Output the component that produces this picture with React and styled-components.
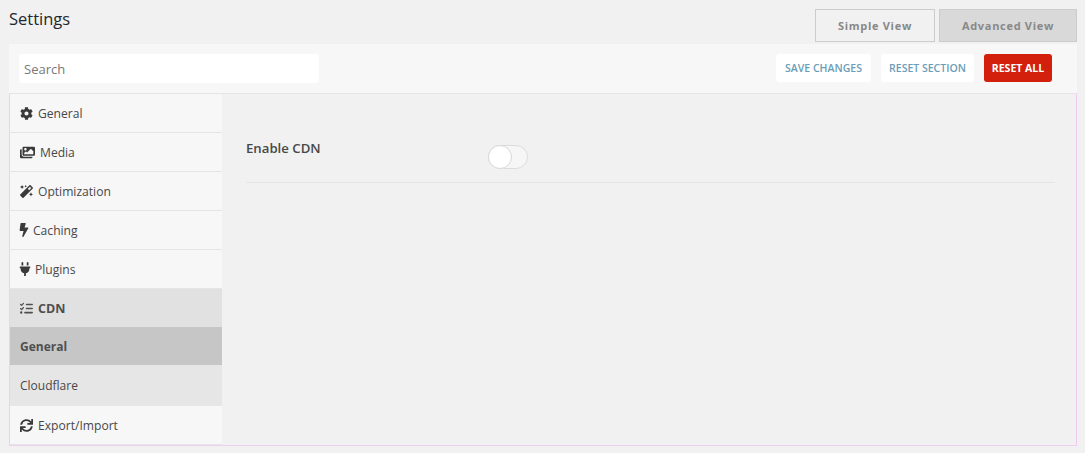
import React from "react";
import styled, { createGlobalStyle } from "styled-components";
import { FaCog, FaImages, FaMagic, FaBolt, FaPlug, FaSync } from "react-icons/fa";
import { FaListCheck } from "react-icons/fa6";

const Global = createGlobalStyle`
  html, body { margin: 0; padding: 0; background: #f1f1f1; }
  body { font-family: "Open Sans", "Noto Sans", sans-serif; color: #444; }
  * { box-sizing: border-box; }
`;

const menu = [
  { label: "General", width: 13, icon: <FaCog size={13} /> },
  { label: "Media", width: 15, icon: <FaImages size={15} /> },
  { label: "Optimization", width: 13, icon: <FaMagic size={13} /> },
  { label: "Caching", width: 8, icon: <FaBolt size={14} /> },
  { label: "Plugins", width: 10, icon: <FaPlug size={14} /> },
];

const App = () => (
  <Page>
    <Global />
    <Header>
      <Title>Settings</Title>
      <Views>
        <ViewTab $w={120}>Simple View</ViewTab>
        <ViewTab $w={138} $active>Advanced View</ViewTab>
      </Views>
    </Header>
    <Panel>
      <Toolbar>
        <Search placeholder="Search" />
        <Actions>
          <ActionButton $w={95}>SAVE CHANGES</ActionButton>
          <ActionButton $w={93}>RESET SECTION</ActionButton>
          <ActionButton $w={68} $danger>RESET ALL</ActionButton>
        </Actions>
      </Toolbar>
      <Body>
        <Sidebar>
          {menu.map((m) => (
            <MenuItem key={m.label}>
              <IconSlot $w={m.width}>{m.icon}</IconSlot>
              {m.label}
            </MenuItem>
          ))}
          <SectionHead>
            <FaListCheck size={13} />
            CDN
          </SectionHead>
          <SubItem $active>General</SubItem>
          <SubItem>Cloudflare</SubItem>
          <MenuItem>
            <IconSlot $w={13}><FaSync size={13} /></IconSlot>
            Export/Import
          </MenuItem>
        </Sidebar>
        <Content>
          <FieldRow>
            <FieldLabel>Enable CDN</FieldLabel>
            <Toggle>
              <Knob />
            </Toggle>
          </FieldRow>
        </Content>
      </Body>
    </Panel>
  </Page>
);

const Page = styled.div`
  width: 1085px;
  height: 453px;
  padding: 0 8px 0 9px;
  overflow: hidden;
`;

const Header = styled.div`
  display: flex;
  justify-content: space-between;
  height: 44px;
`;

const Title = styled.h1`
  margin: 8px 0 0;
  font-size: 16.5px;
  line-height: 22px;
  font-weight: 500;
  color: #23282d;
`;

const Views = styled.div`
  display: flex;
  gap: 4px;
  padding-top: 9px;
`;

const ViewTab = styled.div`
  width: ${(p) => p.$w}px;
  height: 33px;
  padding-bottom: 1px;
  display: flex;
  align-items: center;
  justify-content: center;
  font-size: 11px;
  font-weight: 700;
  letter-spacing: 0.7px;
  color: #888;
  border: 1px solid #ccc;
  background: ${(p) => (p.$active ? "#d9d9d9" : "#f1f1f1")};
`;

const Panel = styled.div`
  display: flex;
  flex-direction: column;
  height: 402px;
`;

const Toolbar = styled.div`
  height: 50px;
  padding: 10px 25px 0 10px;
  display: flex;
  justify-content: space-between;
  background: #f7f7f7;
  border-bottom: 1px solid #e7e3e7;
`;

const Search = styled.input`
  width: 300px;
  height: 29px;
  padding: 0 5px;
  border: 0;
  border-radius: 3px;
  background: #fff;
  font: 13px "Open Sans", sans-serif;
  &::placeholder { color: #777; opacity: 1; }
`;

const Actions = styled.div`
  display: flex;
  gap: 10px;
`;

const ActionButton = styled.div`
  width: ${(p) => p.$w}px;
  height: 28px;
  display: flex;
  align-items: center;
  justify-content: center;
  border-radius: 3px;
  font-size: 10.5px;
  font-weight: ${(p) => (p.$danger ? 700 : 600)};
  color: ${(p) => (p.$danger ? "#fff" : "#6a9db8")};
  background: ${(p) => (p.$danger ? "#d2200c" : "#fff")};
`;

const Body = styled.div`
  flex: 1;
  display: flex;
  border-left: 1px solid #ecd3ec;
  border-right: 1px solid #f0c8f0;
  border-bottom: 1px solid #ecd0ec;
`;

const Sidebar = styled.nav`
  width: 212px;
  display: flex;
  flex-direction: column;
`;

const MenuItem = styled.div`
  height: 39px;
  flex: none;
  padding-left: 10px;
  display: flex;
  align-items: center;
  gap: 5px;
  font-size: 12.1px;
  color: #484848;
  background: #f7f7f7;
  border-bottom: 1px solid #e7e3e7;
`;

const IconSlot = styled.span`
  width: ${(p) => p.$w}px;
  flex: none;
  display: flex;
  justify-content: center;
  color: #3a3a3a;
  svg { flex: none; }
`;

const SectionHead = styled.div`
  height: 38px;
  flex: none;
  padding-left: 10px;
  display: flex;
  align-items: center;
  gap: 5px;
  font-size: 12.5px;
  font-weight: 700;
  color: #4f4f4f;
  background: #e1e1e1;
  svg { color: #4f4f4f; }
`;

const SubItem = styled.div`
  height: ${(p) => (p.$active ? 38 : 41)}px;
  flex: none;
  padding-left: 10px;
  display: flex;
  align-items: center;
  font-size: 12px;
  font-weight: ${(p) => (p.$active ? 700 : 400)};
  color: ${(p) => (p.$active ? "#4f4f4f" : "#484848")};
  background: ${(p) => (p.$active ? "#c6c6c6" : "#e6e6e6")};
`;

const Content = styled.main`
  flex: 1;
  padding: 30px 21px 0 24px;
`;

const FieldRow = styled.div`
  height: 59px;
  display: flex;
  border-bottom: 1px solid #e5e5e5;
`;

const FieldLabel = styled.div`
  width: 242px;
  padding-top: 15px;
  font-size: 13.2px;
  line-height: 18px;
  font-weight: 600;
  color: #484848;
`;

const Toggle = styled.div`
  width: 40px;
  height: 24px;
  margin-top: 21px;
  border: 1px solid #dcdcdc;
  border-radius: 12px;
  background: #f6f6f6;
`;

const Knob = styled.div`
  width: 24px;
  height: 24px;
  margin: -1px 0 0 -1px;
  border-radius: 50%;
  border: 1px solid #d8d8d8;
  background: #fff;
`;

export default App;
